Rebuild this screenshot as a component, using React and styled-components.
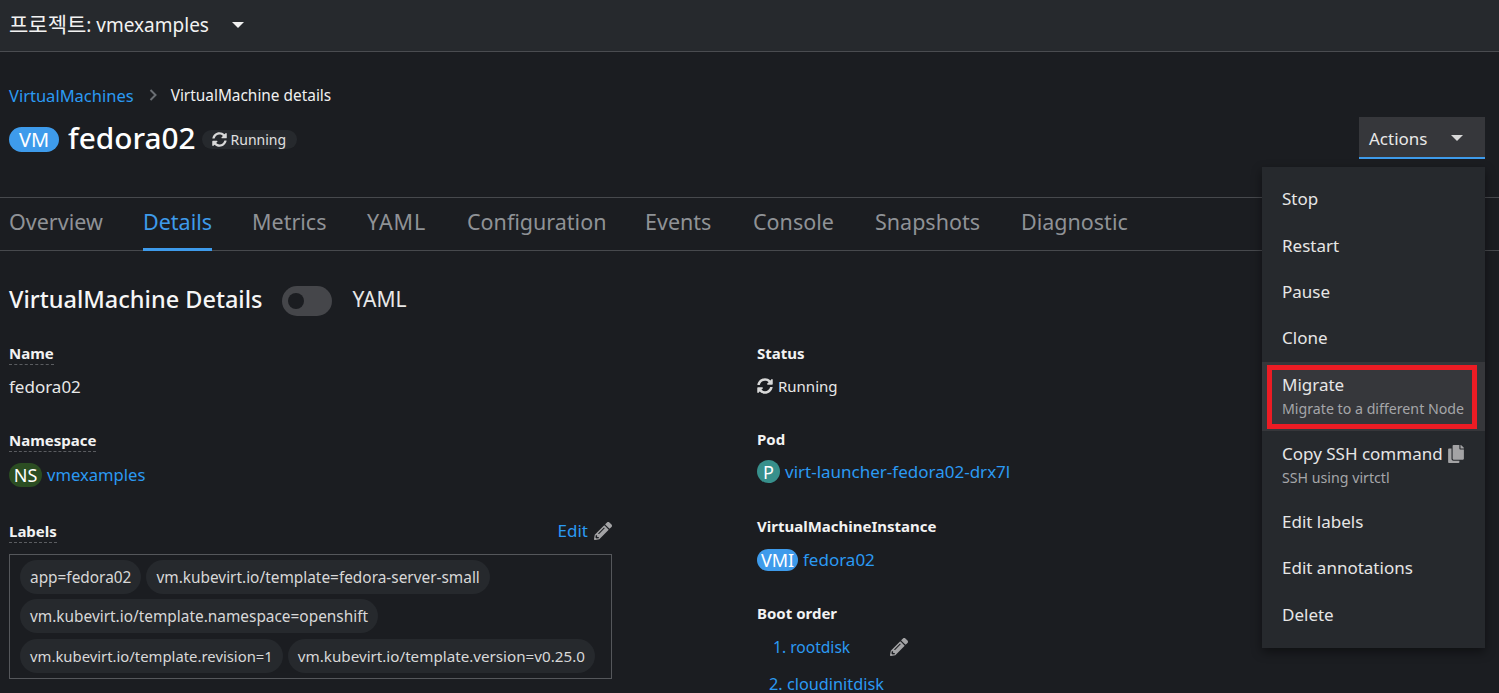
import React from 'react';
import styled, { createGlobalStyle } from 'styled-components';

const Global = createGlobalStyle`
  html, body { margin: 0; padding: 0; background: #1b1d21; overflow: hidden; }
  body { font-family: "Noto Sans", "Noto Sans CJK KR", sans-serif; color: #e6e6e6; }
  * { box-sizing: border-box; }
`;

const Page = styled.div`
  position: relative;
  width: 1499px;
  height: 693px;
  overflow: hidden;
  background: #1b1d21;
`;
const TopBar = styled.header`
  height: 52px;
  background: #26292d;
  border-bottom: 1px solid #4a4c50;
  display: flex;
  align-items: center;
  padding: 0 0 5px 9px;
  gap: 23px;
`;
const ProjectName = styled.span`
  font-size: 19px;
  color: #f2f2f2;
  font-family: "Noto Sans", "Noto Sans CJK KR", sans-serif;
`;
const ProjectWord = styled.span`
  font-size: 21px;
`;
const Caret = styled.span`
  display: inline-block;
  width: 0;
  height: 0;
  margin-top: ${p => p.$mt || 0}px;
  border-left: 6.5px solid transparent;
  border-right: 6.5px solid transparent;
  border-top: 6px solid ${p => p.$color || '#f0f0f0'};
`;
const Head = styled.section`
  height: 145px;
  padding: 32px 14px 0 9px;
`;
const Crumbs = styled.nav`
  display: flex;
  align-items: center;
  height: 22px;
`;
const CrumbLink = styled.a`
  color: #2b9af3;
  font-size: 16.5px;
`;
const CrumbSep = styled.span`
  display: flex;
  margin: 0 14px 0 15px;
  color: #6a6e73;
`;
const CrumbCurrent = styled.span`
  color: #f0f0f0;
  font-size: 15.4px;
`;
const TitleRow = styled.div`
  display: flex;
  align-items: center;
  justify-content: space-between;
  margin-top: 10px;
  height: 44px;
`;
const TitleLeft = styled.div`
  display: flex;
  align-items: center;
`;
const Badge = styled.span`
  display: inline-flex;
  align-items: center;
  justify-content: center;
  background: ${p => p.$bg || '#3e9beb'};
  color: #fff;
  border-radius: 14px;
  font-size: ${p => p.$size || 16}px;
  width: ${p => p.$w}px;
  height: ${p => p.$h}px;
  margin-top: ${p => p.$mt || 0}px;
  flex: none;
`;
const Title = styled.h1`
  margin: 0 6px 0 9px;
  font-size: 29.8px;
  font-weight: 500;
  color: #fff;
  line-height: 1;
`;
const StatusPill = styled.span`
  display: inline-flex;
  align-items: center;
  gap: 4px;
  height: 19px;
  margin-top: 3px;
  padding: 0 11px 0 10px;
  border-radius: 10px;
  background: #26292d;
  font-size: 14px;
  color: #e0e0e0;
`;
const ActionsButton = styled.button`
  width: 126px;
  height: 42px;
  border: 0;
  border-bottom: 2px solid #3e9beb;
  background: #36373b;
  color: #e8e8e8;
  font: inherit;
  font-size: 17px;
  display: flex;
  align-items: center;
  justify-content: space-between;
  padding: 2px 22px 0 10px;
`;
const Tabs = styled.nav`
  height: 54px;
  border-top: 1px solid #47494d;
  border-bottom: 1px solid #47494d;
  display: flex;
  padding-left: 9px;
  gap: 40px;
`;
const Tab = styled.a`
  width: ${p => p.$w}px;
  height: 53px;
  display: flex;
  align-items: center;
  white-space: nowrap;
  font-size: 21.5px;
  letter-spacing: ${p => p.$spacing || 0}px;
  color: ${p => (p.$active ? '#3e9beb' : '#8f9296')};
  border-bottom: 3px solid ${p => (p.$active ? '#3e9beb' : 'transparent')};
  padding-bottom: 3px;
`;
const Body = styled.main`
  padding: 31px 0 0 9px;
`;
const SectionHead = styled.div`
  display: flex;
  align-items: center;
  height: 34px;
`;
const SectionTitle = styled.h2`
  margin: 0 20px 0 0;
  font-size: 23.5px;
  font-weight: 500;
  color: #f6f6f6;
`;
const Toggle = styled.span`
  width: 50px;
  height: 30px;
  margin: 4px 20px 0 0;
  border-radius: 15px;
  background: #45464a;
  display: flex;
  align-items: center;
  padding-left: 6px;
  &::before {
    content: '';
    width: 16px;
    height: 16px;
    border-radius: 50%;
    background: #1b1d21;
  }
`;
const ToggleLabel = styled.span`
  font-size: 21px;
  color: #e8e8e8;
`;
const Grid = styled.div`
  display: grid;
  grid-template-columns: 603px 400px;
  column-gap: 145px;
  margin-top: 26px;
`;
const Column = styled.div`
  display: flex;
  flex-direction: column;
`;
const Field = styled.div`
  height: ${p => p.$h}px;
`;
const LabelRow = styled.div`
  display: flex;
  align-items: flex-start;
  justify-content: space-between;
`;
const Label = styled.span`
  display: inline-block;
  font-size: 15px;
  font-weight: 700;
  line-height: 22px;
  color: #f2f2f2;
  border-bottom: ${p => (p.$dashed ? '1px dashed #5a5c60' : '0')};
`;
const Value = styled.div`
  display: flex;
  align-items: center;
  gap: 5px;
  margin-top: ${p => p.$mt || 11}px;
  font-size: ${p => p.$size || 17}px;
  line-height: 22px;
  color: #e8e8e8;
`;
const Link = styled.a`
  color: #2b9af3;
  font-size: ${p => p.$size || 17}px;
`;
const EditLink = styled.a`
  display: flex;
  align-items: center;
  gap: 6px;
  margin-top: -1px;
  color: #2b9af3;
  font-size: 17px;
`;
const LabelBox = styled.div`
  margin-top: 11px;
  border: 1px solid #55575b;
  padding: 5px 10px;
  display: flex;
  flex-wrap: wrap;
  gap: 5px;
  height: 125px;
`;
const Chip = styled.span`
  height: 34px;
  line-height: 35px;
  padding: 0 10px;
  border-radius: 17px;
  background: #26292d;
  font-size: ${p => p.$size || 15.4}px;
  color: #d8d8d8;
`;
const BootList = styled.div`
  margin-top: 4px;
`;
const BootRow = styled.div`
  display: flex;
  align-items: center;
  height: 37px;
`;
const BootLink = styled.a`
  color: #2b9af3;
  font-size: ${p => p.$size}px;
  width: ${p => p.$w}px;
  padding-left: ${p => p.$pl}px;
`;
const Menu = styled.div`
  position: absolute;
  left: 1262px;
  top: 167px;
  width: 223px;
  height: 481px;
  padding: 9px 0 0;
  background: #26292d;
  box-shadow: 0 4px 10px rgba(0, 0, 0, 0.45);
`;
const MenuItem = styled.div`
  position: relative;
  height: ${p => p.$h || 46.4}px;
  padding: ${p => (p.$top ? 12 : 0)}px 20px 0;
  background: ${p => (p.$hover ? '#36373b' : 'transparent')};
  display: flex;
  flex-direction: column;
  justify-content: ${p => (p.$top ? 'flex-start' : 'center')};
`;
const MenuMain = styled.span`
  display: flex;
  align-items: center;
  gap: 5px;
  font-size: 17px;
  line-height: 22px;
  color: #e6e6e6;
`;
const MenuSub = styled.span`
  margin-top: 3px;
  font-size: 14.2px;
  line-height: 20px;
  color: #a5a6a9;
`;
const Highlight = styled.span`
  position: absolute;
  left: 5px;
  top: 3px;
  width: 210px;
  height: 64px;
  border: 5px solid #ed1c24;
`;

const SyncIcon = ({ size = 15, color = '#d8d8d8' }) => (
  <svg width={size} height={size} viewBox="0 0 512 512" fill={color}>
    <path d="M370.7 133.3C339.5 104 298.9 88 255.8 88c-77.5.1-144.3 53.2-162.8 126.9-1.3 5.4-6.1 9.2-11.7 9.2H24.1c-7.5 0-13.2-6.8-11.8-14.2C33.9 94.9 134.8 8 256 8c66.4 0 126.8 26.1 171.3 68.7L463 41c15.1-15.1 41-4.4 41 17v134c0 13.3-10.7 24-24 24H346c-21.4 0-32.1-25.9-17-41l41.7-41.7zM32 296h134c21.4 0 32.1 25.9 17 41l-41.8 41.8c31.3 29.3 71.8 45.3 114.9 45.2 77.4-.1 144.3-53.1 162.8-126.8 1.3-5.4 6.1-9.2 11.7-9.2h57.3c7.5 0 13.2 6.8 11.8 14.2C478.1 417.1 377.2 504 256 504c-66.4 0-126.8-26.1-171.3-68.7L49 471c-15.1 15.1-41 4.4-41-17V320c0-13.3 10.7-24 24-24z" />
  </svg>
);
const PencilIcon = ({ size = 18 }) => (
  <svg width={size} height={size} viewBox="0 0 512 512" fill="#a3a3a5">
    <path d="M497.9 142.1l-46.1 46.1c-4.7 4.7-12.3 4.7-17 0l-111-111c-4.7-4.7-4.7-12.3 0-17l46.1-46.1c18.7-18.7 49.1-18.7 67.9 0l60.1 60.1c18.8 18.7 18.8 49.1 0 67.9zM284.2 99.8L21.6 362.4.4 483.9c-2.9 16.4 11.4 30.6 27.8 27.8l121.5-21.3 262.6-262.6c4.7-4.7 4.7-12.3 0-17l-111-111c-4.8-4.7-12.4-4.7-17.1 0zM124.1 339.9c-5.5-5.5-5.5-14.3 0-19.8l154-154c5.5-5.5 14.3-5.5 19.8 0s5.5 14.3 0 19.8l-154 154c-5.5 5.5-14.3 5.5-19.8 0zM88 424h48v36.3l-64.5 11.3-31.1-31.1L51.7 376H88v48z" />
  </svg>
);
const CopyIcon = () => (
  <svg width="16" height="18" viewBox="0 0 448 512" fill="#a3a3a5">
    <path d="M320 448v40c0 13.3-10.7 24-24 24H24c-13.3 0-24-10.7-24-24V120c0-13.3 10.7-24 24-24h72v296c0 30.9 25.1 56 56 56h168zm0-344V0H152c-13.3 0-24 10.7-24 24v368c0 13.3 10.7 24 24 24h272c13.3 0 24-10.7 24-24V128H344c-13.2 0-24-10.8-24-24zm120.97-31.03L375.03 7.03A24 24 0 0 0 358.06 0H352v96h96v-6.06a24 24 0 0 0-7.03-16.97z" />
  </svg>
);
const ChevronIcon = () => (
  <svg width="8" height="12" viewBox="0 0 8 12" fill="none" stroke="#6a6e73" strokeWidth="2">
    <path d="M1.5 1l5 5-5 5" />
  </svg>
);

const tabs = [
  ['Overview', 94],
  ['Details', 69],
  ['Metrics', 75],
  ['YAML', 60, 1],
  ['Configuration', 138],
  ['Events', 68],
  ['Console', 82],
  ['Snapshots', 106],
  ['Diagnostic', 106],
];
const chips = [
  ['app=fedora02'],
  ['vm.kubevirt.io/template=fedora-server-small'],
  ['vm.kubevirt.io/template.namespace=openshift'],
  ['vm.kubevirt.io/template.revision=1', 14.85],
  ['vm.kubevirt.io/template.version=v0.25.0', 15.2],
];

export default function App() {
  return (
    <Page>
      <Global />
      <TopBar>
        <ProjectName><ProjectWord>프로젝트</ProjectWord>: vmexamples</ProjectName>
        <Caret $mt={3} />
      </TopBar>
      <Head>
        <Crumbs>
          <CrumbLink>VirtualMachines</CrumbLink>
          <CrumbSep><ChevronIcon /></CrumbSep>
          <CrumbCurrent>VirtualMachine details</CrumbCurrent>
        </Crumbs>
        <TitleRow>
          <TitleLeft>
            <Badge $w={50} $h={25} $size={20} $mt={3}>VM</Badge>
            <Title>fedora02</Title>
            <StatusPill><SyncIcon />Running</StatusPill>
          </TitleLeft>
          <ActionsButton>Actions<Caret $color="#d8d8d8" /></ActionsButton>
        </TitleRow>
      </Head>
      <Tabs>
        {tabs.map(([t, w, s]) => <Tab key={t} $w={w} $spacing={s} $active={t === 'Details'}>{t}</Tab>)}
      </Tabs>
      <Body>
        <SectionHead>
          <SectionTitle>VirtualMachine Details</SectionTitle>
          <Toggle />
          <ToggleLabel>YAML</ToggleLabel>
        </SectionHead>
        <Grid>
          <Column>
            <Field $h={87}>
              <Label $dashed>Name</Label>
              <Value>fedora02</Value>
            </Field>
            <Field $h={91}>
              <Label $dashed>Namespace</Label>
              <Value>
                <Badge $w={33} $h={24} $bg="#2b4d22" $size={18}>NS</Badge>
                <Link $size={16.6}>vmexamples</Link>
              </Value>
            </Field>
            <Field $h={160}>
              <LabelRow>
                <Label $dashed>Labels</Label>
                <EditLink>Edit <PencilIcon /></EditLink>
              </LabelRow>
              <LabelBox>
                {chips.map(([c, s]) => <Chip key={c} $size={s}>{c}</Chip>)}
              </LabelBox>
            </Field>
          </Column>
          <Column>
            <Field $h={86}>
              <Label>Status</Label>
              <Value $size={15}><SyncIcon size={16} /> Running</Value>
            </Field>
            <Field $h={87}>
              <Label>Pod</Label>
              <Value $mt={10}>
                <Badge $w={23} $h={23} $bg="#37908c" $size={18}>P</Badge>
                <Link>virt-launcher-fedora02-drx7l</Link>
              </Value>
            </Field>
            <Field $h={87}>
              <Label>VirtualMachineInstance</Label>
              <Value $mt={12}>
                <Badge $w={41} $h={22} $size={18}>VMI</Badge>
                <Link>fedora02</Link>
              </Value>
            </Field>
            <Field $h={120}>
              <Label>Boot order</Label>
              <BootList>
                <BootRow>
                  <BootLink $w={133} $pl={16} $size={15.6}>1. rootdisk</BootLink>
                  <PencilIcon />
                </BootRow>
                <BootRow>
                  <BootLink $w={160} $pl={12} $size={16.3}>2. cloudinitdisk</BootLink>
                </BootRow>
              </BootList>
            </Field>
          </Column>
        </Grid>
      </Body>
      <Menu>
        <MenuItem><MenuMain>Stop</MenuMain></MenuItem>
        <MenuItem><MenuMain>Restart</MenuMain></MenuItem>
        <MenuItem><MenuMain>Pause</MenuMain></MenuItem>
        <MenuItem><MenuMain>Clone</MenuMain></MenuItem>
        <MenuItem $hover $h={69} $top>
          <MenuMain>Migrate</MenuMain>
          <MenuSub>Migrate to a different Node</MenuSub>
          <Highlight />
        </MenuItem>
        <MenuItem $h={68} $top>
          <MenuMain>Copy SSH command <CopyIcon /></MenuMain>
          <MenuSub>SSH using virtctl</MenuSub>
        </MenuItem>
        <MenuItem><MenuMain>Edit labels</MenuMain></MenuItem>
        <MenuItem><MenuMain>Edit annotations</MenuMain></MenuItem>
        <MenuItem><MenuMain>Delete</MenuMain></MenuItem>
      </Menu>
    </Page>
  );
}
